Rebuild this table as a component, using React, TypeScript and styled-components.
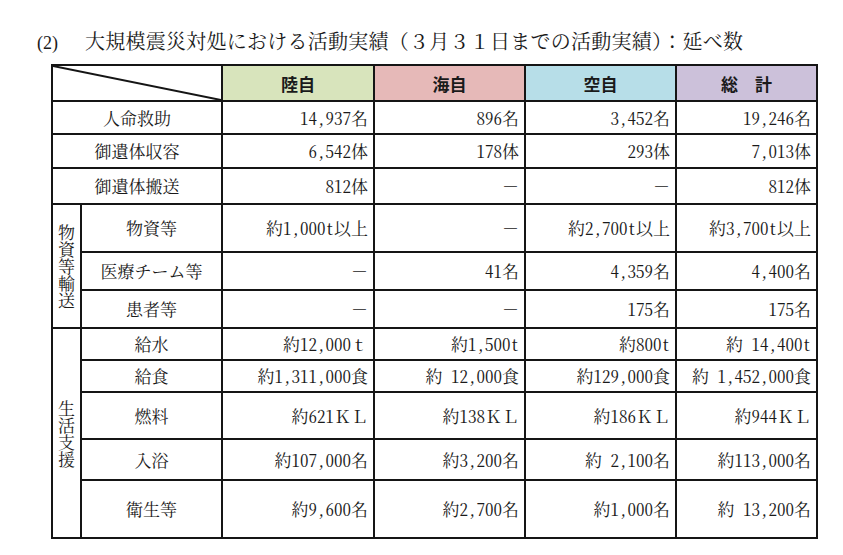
import React from "react";
import styled, { createGlobalStyle } from "styled-components";

const GlobalStyle = createGlobalStyle`
  html, body { margin: 0; padding: 0; background: #ffffff; }
  body {
    font-family: "Noto Serif CJK JP", "Liberation Serif", "Noto Sans CJK JP", serif;
    color: #1a1a1a;
  }
`;

const Page = styled.div`
  width: 843px;
  height: 555px;
  box-sizing: border-box;
  padding: 27px 0 0 37px;
  overflow: hidden;
`;

const Title = styled.h2`
  margin: 0 0 7px 0;
  font-size: 20px;
  line-height: 28px;
  font-weight: 400;
  white-space: nowrap;
  letter-spacing: 0.25px;
  font-family: "Noto Serif CJK JP", "Liberation Serif", "Noto Sans CJK JP", serif;
`;

const Num = styled.span`
  display: inline-block;
  margin-right: 27px;
  font-size: 18px;
  letter-spacing: 0;
  font-family: "Liberation Serif", serif;
`;

const Table = styled.table`
  margin-left: 14px;
  border-collapse: collapse;
  table-layout: fixed;
  width: 765px;
  font-size: 17px;
`;

const Cell = styled.td<{ $h?: number }>`
  border: 2px solid #151515;
  padding: 0 5px 0 4px;
  height: ${(p) => (p.$h ? p.$h - 2 : 30)}px;
  vertical-align: middle;
  white-space: pre;
  line-height: 20px;
  font-family: "Noto Serif CJK JP", "Liberation Serif", "Noto Sans CJK JP", serif;
  font-feature-settings: "hwid" 1;
`;

const Full = styled.span`
  font-feature-settings: "hwid" 0;
`;

const Corner = styled.td`
  position: relative;
  border: 2px solid #151515;
  padding: 0;
  height: 34px;
`;

const Slash = styled.svg`
  position: absolute;
  left: 0;
  top: 0;
  width: 100%;
  height: 100%;
  display: block;
`;

const Head = styled.td<{ $bg: string }>`
  border: 2px solid #151515;
  background: ${(p) => p.$bg};
  text-align: center;
  vertical-align: middle;
  padding: 0;
  font-family: "Noto Sans CJK JP", sans-serif;
  font-weight: 700;
  font-size: 17px;
  white-space: pre;
`;

const Label = styled(Cell)`
  text-align: center;
  padding: 0;
`;

const Group = styled.td`
  border: 2px solid #151515;
  padding: 0;
  text-align: center;
  vertical-align: middle;
`;

const Vertical = styled.span`
  display: inline-block;
  writing-mode: vertical-rl;
  text-orientation: upright;
  font-size: 17px;
  line-height: 17px;
  letter-spacing: 0;
  margin-top: 6px;
`;

const Value = styled(Cell)`
  text-align: right;
`;

type Row = { label: string; h: number; vals: string[] };

const top: Row[] = [
  { label: "人命救助", h: 33, vals: ["14,937名", "896名", "3,452名", "19,246名"] },
  { label: "御遺体収容", h: 34, vals: ["6,542体", "178体", "293体", "7,013体"] },
  { label: "御遺体搬送", h: 36, vals: ["812体", "－", "－", "812体"] },
];

const transport: Row[] = [
  { label: "物資等", h: 48, vals: ["約1,000t以上", "－", "約2,700t以上", "約3,700t以上"] },
  { label: "医療チーム等", h: 38, vals: ["－", "41名", "4,359名", "4,400名"] },
  { label: "患者等", h: 38, vals: ["－", "－", "175名", "175名"] },
];

const life: Row[] = [
  { label: "給水", h: 32, vals: ["約12,000ｔ", "約1,500t", "約800t", "約 14,400t"] },
  { label: "給食", h: 32, vals: ["約1,311,000食", "約 12,000食", "約129,000食", "約 1,452,000食"] },
  { label: "燃料", h: 47, vals: ["約621ＫＬ", "約138ＫＬ", "約186ＫＬ", "約944ＫＬ"] },
  { label: "入浴", h: 41, vals: ["約107,000名", "約3,200名", "約 2,100名", "約113,000名"] },
  { label: "衛生等", h: 58, vals: ["約9,600名", "約2,700名", "約1,000名", "約 13,200名"] },
];

const renderText = (v: string) =>
  v.split(/([－ＫＬｔ]+)/).map((part, i) =>
    /^[－ＫＬｔ]+$/.test(part) ? <Full key={i}>{part}</Full> : part
  );

const Values = ({ vals, h }: { vals: string[]; h: number }) => (
  <>
    {vals.map((v, i) => (
      <Value key={i} $h={h}>
        {renderText(v)}
      </Value>
    ))}
  </>
);

export default function App() {
  return (
    <>
      <GlobalStyle />
      <Page>
        <Title>
          <Num>(2)</Num>大規模震災対処における活動実績（３月３１日までの活動実績）：延べ数
        </Title>
        <Table>
          <colgroup>
            <col style={{ width: 29 }} />
            <col style={{ width: 141 }} />
            <col style={{ width: 152 }} />
            <col style={{ width: 151 }} />
            <col style={{ width: 151 }} />
            <col style={{ width: 141 }} />
          </colgroup>
          <tbody>
            <tr>
              <Corner colSpan={2}>
                <Slash viewBox="0 0 100 100" preserveAspectRatio="none">
                  <line x1="0" y1="0" x2="100" y2="100" stroke="#151515" strokeWidth="2" vectorEffect="non-scaling-stroke" />
                </Slash>
              </Corner>
              <Head $bg="#d8e4bc">陸自</Head>
              <Head $bg="#e6b9b8">海自</Head>
              <Head $bg="#b7dee8">空自</Head>
              <Head $bg="#ccc1da">総　計</Head>
            </tr>
            {top.map((r) => (
              <tr key={r.label}>
                <Label colSpan={2} $h={r.h}>{r.label}</Label>
                <Values vals={r.vals} h={r.h} />
              </tr>
            ))}
            {transport.map((r, i) => (
              <tr key={r.label}>
                {i === 0 && (
                  <Group rowSpan={transport.length}>
                    <Vertical>物資等輸送</Vertical>
                  </Group>
                )}
                <Label $h={r.h}>{r.label}</Label>
                <Values vals={r.vals} h={r.h} />
              </tr>
            ))}
            {life.map((r, i) => (
              <tr key={r.label}>
                {i === 0 && (
                  <Group rowSpan={life.length}>
                    <Vertical>生活支援</Vertical>
                  </Group>
                )}
                <Label $h={r.h}>{r.label}</Label>
                <Values vals={r.vals} h={r.h} />
              </tr>
            ))}
          </tbody>
        </Table>
      </Page>
    </>
  );
}
